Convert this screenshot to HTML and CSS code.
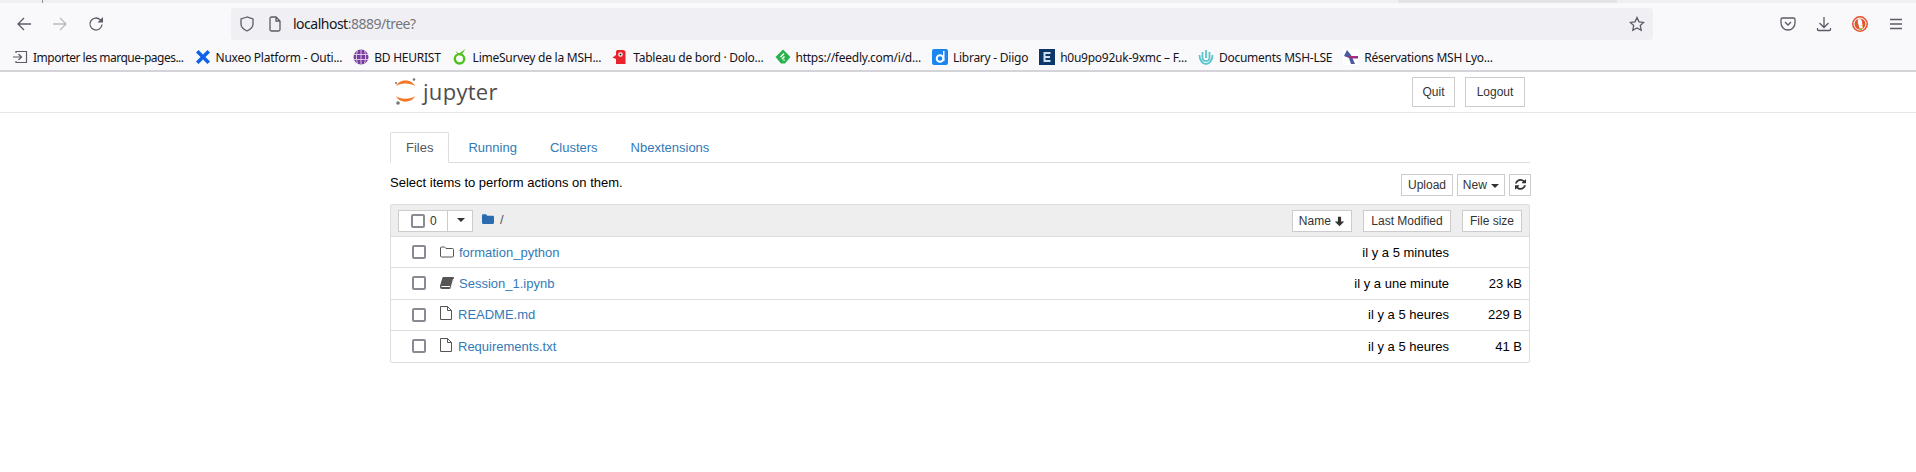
FILE: index.html
```html
<!DOCTYPE html>
<html lang="fr">
<head>
    <meta charset="UTF-8">
    <title>Home Page - Select or create a notebook</title>
    <link rel="stylesheet" href="styles.css">
</head>
<body>
    <!-- Browser toolbar -->
    <div class="tab-strip">
        <span class="tab-divider"></span>
        <span class="tab-shadow"></span>
    </div>
    <div class="nav-bar">
        <svg class="nav-icon back" viewBox="0 0 16 16"><path d="M15 8H2M8 2L2 8l6 6"/></svg>
        <svg class="nav-icon forward" viewBox="0 0 16 16"><path d="M1 8h13M8 2l6 6-6 6"/></svg>
        <svg class="nav-icon reload" viewBox="0 0 16 16"><path d="M14 8.500A6 6 0 1 1 12.200 3.700L14 5.200"/><path class="solid" d="M15 1v5.500h-5.500z"/></svg>
        <div class="url-bar">
            <svg class="url-icon" viewBox="0 0 16 16"><path d="M8 1L2 3v5c0 3.500 2.500 5.500 6 7 3.500-1.500 6-3.500 6-7V3z"/></svg>
            <svg class="url-icon page" viewBox="0 0 16 16"><path d="M3 2.500A1.500 1.500 0 0 1 4.500 1H9l4 4v8.500a1.500 1.500 0 0 1-1.500 1.500h-7A1.500 1.500 0 0 1 3 13.500zM9 1v4h4"/></svg>
            <span class="url-text">localhost<span class="url-rest">:8889/tree?</span></span>
            <svg class="url-icon star" viewBox="0 0 16 16"><path d="M8 1.500l2 4.300 4.700.6-3.400 3.200.9 4.700L8 12l-4.200 2.300.9-4.700L1.300 6.400 6 5.800z"/></svg>
        </div>
        <svg class="nav-icon pocket" viewBox="0 0 16 16"><path d="M2.500 2h11A1.500 1.500 0 0 1 15 3.500V7a7 7 0 0 1-14 0V3.500A1.500 1.500 0 0 1 2.500 2zM5 6l3 3 3-3"/></svg>
        <svg class="nav-icon download" viewBox="0 0 16 16"><path d="M8 1v10M3.500 7L8 11.500 12.500 7M1.500 12v1.500a1 1 0 0 0 1 1h11a1 1 0 0 0 1-1V12"/></svg>
        <svg class="nav-icon duck" viewBox="0 0 16 16">
            <circle class="duck-ring" cx="8" cy="8" r="7.200"/>
            <circle class="duck-fill" cx="8" cy="8" r="5.500"/>
            <path class="duck-body" d="M6 3.500c2-1 4 0 4 2.500 0 1.500 1 3 .5 6.500H7.500C7.500 10 5 7 6 3.500z"/>
            <path class="duck-beak" d="M8 9.500l3-.5v1.500z"/>
            <path class="duck-tie" d="M7.500 12.500h3l-1 1.500h-1.500z"/>
        </svg>
        <svg class="nav-icon menu" viewBox="0 0 16 16"><path d="M2 3.500h12M2 8h12M2 12.500h12"/></svg>
    </div>

    <!-- Bookmarks -->
    <div class="bookmarks">
        <a class="bm bm-import">
            <svg class="bm-icon" viewBox="0 0 16 16"><path class="line" d="M1 8h8M6.500 5L9.500 8l-3 3M4 4V2.500h10.500v11H4V12"/></svg>
            Importer les marque-pages...
        </a>
        <a class="bm">
            <svg class="bm-icon" viewBox="0 0 16 16"><path d="M1 3.500L3.500 1 8 5.500 12.500 1 15 3.500 10.500 8l4.500 4.500-2.500 2.500L8 10.500 3.500 15 1 12.500 5.500 8z" fill="#0f62e6"/></svg>
            Nuxeo Platform - Outi...
        </a>
        <a class="bm">
            <svg class="bm-icon" viewBox="0 0 16 16"><circle cx="8" cy="8" r="7.500" fill="#7a3d9e"/><path d="M.5 5.500h15M.5 10.500h15M8 .5v15M4.500 1.500c-1.500 4-1.500 9 0 13M11.500 1.500c1.500 4 1.500 9 0 13" stroke="#d9c6e6" fill="none"/></svg>
            BD HEURIST
        </a>
        <a class="bm">
            <svg class="bm-icon" viewBox="0 0 16 16"><circle cx="7.500" cy="9.800" r="4.700" fill="none" stroke="#4fc01e" stroke-width="2.400"/><path d="M3.500 2l3.500 2.500L13.500 0 9 6.500 6 5.500z" fill="#4fc01e"/></svg>
            LimeSurvey de la MSH...
        </a>
        <a class="bm">
            <svg class="bm-icon" viewBox="0 0 16 16"><path d="M4 3c0-1.500 1-2 2-2h5c1.500 0 2.500 1 2.500 2v12H4V10L.5 8.500 4 6z" fill="#e8242c"/><circle cx="8.500" cy="5.500" r="2.200" fill="#fff"/><circle cx="8.500" cy="5.500" r="1" fill="#222"/></svg>
            Tableau de bord · Dolo...
        </a>
        <a class="bm">
            <svg class="bm-icon" viewBox="0 0 16 16"><path d="M8 .5L15.500 8 10 14.500H6L.5 8z" fill="#2bb24c"/><path d="M8.500 4L5 7.500l1 1L9.500 5zM9 7L6.500 9.500l1 1L10 8zM9 10l-1 1 1 1 1-1z" fill="#fff"/></svg>
            https://feedly.com/i/d...
        </a>
        <a class="bm">
            <svg class="bm-icon" viewBox="0 0 16 16"><rect width="16" height="16" rx="2" fill="#1a86f0"/><circle cx="8" cy="9.500" r="3.300" fill="none" stroke="#fff" stroke-width="2"/><path d="M11 2h1.500v10H11z" fill="#fff"/></svg>
            Library - Diigo
        </a>
        <a class="bm">
            <svg class="bm-icon" viewBox="0 0 16 16"><rect width="16" height="16" fill="#0c3768"/><path d="M4.500 3h7v2h-5v2h4.500v2H6.500v2h5v2h-7z" fill="#cfe2f3"/></svg>
            h0u9po92uk-9xmc – F...
        </a>
        <a class="bm">
            <svg class="bm-icon" viewBox="0 0 16 16"><path d="M1.500 6c0 5 3 9 6.500 9s6.500-4 6.500-9M4.500 3v5.500c0 2 1.500 3.500 3.500 3.500s3.500-1.500 3.500-3.500V3M8 1v8" fill="none" stroke="#5cc4ce" stroke-width="1.800"/></svg>
            Documents MSH-LSE
        </a>
        <a class="bm">
            <svg class="bm-icon" viewBox="0 0 16 16"><rect width="16" height="16" fill="#fff"/><path d="M4 1l4 5 4 9H8L6 9 1 7z" fill="#4a5a9e"/><path d="M3 7h12v2.500H8z" fill="#a0307e"/></svg>
            Réservations MSH Lyo...
        </a>
    </div>

    <!-- Jupyter header -->
    <div class="header">
        <div class="container header-row">
            <a class="logo">
                <svg class="logo-mark" viewBox="0 0 22 28">
                    <path class="logo-arc" d="M1 8C4 .5 17 .5 20 8 16 4.500 5 4.500 1 8z"/>
                    <path class="logo-arc" d="M1 18c3 7.500 16 7.500 19 0-4 3.500-15 3.500-19 0z"/>
                    <circle class="logo-moon" cx="19" cy="1.500" r="1.300"/>
                    <circle class="logo-moon" cx="1" cy="5" r="1"/>
                    <circle class="logo-moon" cx="3" cy="25" r="1.800"/>
                </svg>
                <span class="logo-text">jupyter</span>
            </a>
            <div class="header-btns">
                <button class="btn btn-tall btn-quit">Quit</button>
                <button class="btn btn-tall btn-logout">Logout</button>
            </div>
        </div>
    </div>

    <div class="container main">
        <ul class="tabs">
            <li class="tab active">Files</li>
            <li class="tab">Running</li>
            <li class="tab">Clusters</li>
            <li class="tab">Nbextensions</li>
        </ul>

        <div class="toolbar">
            <span class="select-hint">Select items to perform actions on them.</span>
            <div class="toolbar-btns">
                <button class="btn btn-upload">Upload</button>
                <button class="btn btn-new">New <span class="caret"></span></button>
                <button class="btn btn-refresh">
                    <svg class="fa" viewBox="0 0 1536 1536"><path d="M1511 896q0 5-1 7-64 268-268 434.500T764 1504q-146 0-282.500-55T238 1292l-129 129q-19 19-45 19t-45-19-19-45V928q0-26 19-45t45-19h448q26 0 45 19t19 45-19 45l-137 137q71 66 161 102t187 36q134 0 250-65t186-179q11-17 53-117 8-23 30-23h192q13 0 22.500 9.500T1511 896zm25-800v448q0 26-19 45t-45 19h-448q-26 0-45-19t-19-45 19-45l138-138Q969 256 768 256q-134 0-250 65T332 500q-11 17-53 117-8 23-30 23H50q-13 0-22.500-9.500T18 608v-7q65-268 270-434.500T768 0q146 0 284 55.500T1297 212l130-129q19-19 45-19t45 19 19 45z"/></svg>
                </button>
            </div>
        </div>

        <div class="file-list">
            <div class="list-head">
                <div class="select-group">
                    <span class="select-count"><span class="checkbox"></span>0</span>
                    <span class="select-drop"><span class="caret"></span></span>
                </div>
                <svg class="crumb-icon" viewBox="0 0 16 13"><path d="M1.500 0h4l1.500 2h7.500A1.500 1.500 0 0 1 16 3.500v8a1.500 1.500 0 0 1-1.500 1.500h-13A1.500 1.500 0 0 1 0 11.500v-10A1.500 1.500 0 0 1 1.500 0z"/></svg>
                <span class="crumb">/</span>
                <div class="sort-btns">
                    <button class="btn sort-name">Name
                        <svg class="fa arrow" viewBox="0 0 14 14"><path d="M5 1h4v6h4l-6 6-6-6h4z"/></svg>
                    </button>
                    <button class="btn sort-date">Last Modified</button>
                    <button class="btn sort-size">File size</button>
                </div>
            </div>

            <div class="row">
                <span class="checkbox"></span>
                <svg class="row-icon" viewBox="0 0 14 12"><path d="M1.500 1h3l1.500 1.500h6.500a1 1 0 0 1 1 1v6.500a1 1 0 0 1-1 1h-11a1 1 0 0 1-1-1V2a1 1 0 0 1 1-1z"/></svg>
                <a class="name">formation_python</a>
                <span class="modified">il y a 5 minutes</span>
                <span class="size"></span>
            </div>
            <div class="row">
                <span class="checkbox"></span>
                <svg class="row-icon solid-icon" viewBox="0 0 14 12"><path d="M3 .5h10.500L11 10c-.3 1-.8 1.500-2 1.500H1.500C.5 11.500 0 10.800.3 9.500z"/><path class="book-line" d="M1.500 9.500h8.500M13.500 2L11 11"/></svg>
                <a class="name">Session_1.ipynb</a>
                <span class="modified">il y a une minute</span>
                <span class="size">23 kB</span>
            </div>
            <div class="row">
                <span class="checkbox"></span>
                <svg class="row-icon file-icon" viewBox="0 0 12 14"><path d="M.5.500h7l4 4v9H.5zM7.500.500v4h4"/></svg>
                <a class="name">README.md</a>
                <span class="modified">il y a 5 heures</span>
                <span class="size">229 B</span>
            </div>
            <div class="row">
                <span class="checkbox"></span>
                <svg class="row-icon file-icon" viewBox="0 0 12 14"><path d="M.5.500h7l4 4v9H.5zM7.500.500v4h4"/></svg>
                <a class="name">Requirements.txt</a>
                <span class="modified">il y a 5 heures</span>
                <span class="size">41 B</span>
            </div>
        </div>
    </div>
</body>
</html>
```

FILE: styles.css
```css
* {
    box-sizing: border-box;
}
body {
    margin: 0;
    background: #fff;
    font-family: "Liberation Sans", Arial, sans-serif;
    font-size: 13px;
    color: #000;
}

/* Browser toolbar */
.tab-strip {
    display: flex;
    height: 3px;
    background: #f0f0f4;
}
.tab-divider {
    width: 1px;
    margin-left: 42px;
    background: #8f8f96;
}
.tab-shadow {
    width: 219px;
    margin-left: 1355px;
    background: #e4e4e8;
}
.nav-bar {
    display: flex;
    align-items: center;
    height: 41px;
    padding: 4px 0 4px 16px;
    background: #f9f9fb;
}
.nav-icon {
    width: 16px;
    height: 16px;
    margin-right: 20px;
    fill: none;
    stroke: #5b5b66;
    stroke-width: 1.300;
    flex: none;
}
.nav-icon.forward {
    stroke: #b9b9bf;
}
.nav-icon .solid {
    fill: #5b5b66;
    stroke: none;
}
.url-bar {
    display: flex;
    align-items: center;
    width: 1422px;
    height: 32px;
    margin: 0 127px 0 107px;
    padding: 0 8px;
    background: #f0f0f4;
    border-radius: 4px;
    flex: none;
}
.url-icon {
    width: 16px;
    height: 16px;
    margin-right: 12px;
    fill: none;
    stroke: #5b5b66;
    stroke-width: 1.300;
    flex: none;
}
.url-icon.page {
    margin-right: 10px;
}
.url-text {
    font-family: "Noto Sans", sans-serif;
    font-size: 14px;
    letter-spacing: -0.5px;
    color: #15141a;
}
.url-rest {
    color: #77767c;
}
.url-icon.star {
    margin: 0 0 0 auto;
}
.duck-ring {
    fill: #fff;
    stroke: #e5502a;
    stroke-width: 1.500;
}
.duck-fill {
    fill: #de5833;
    stroke: none;
}
.duck-body {
    fill: #fff;
    stroke: none;
}
.duck-beak {
    fill: #f2b632;
    stroke: none;
}
.duck-tie {
    fill: #67bd45;
    stroke: none;
}

/* Bookmarks */
.bookmarks {
    display: flex;
    align-items: center;
    height: 28px;
    padding-left: 12px;
    background: #f9f9fb;
    border-bottom: 2px solid #d4d4d8;
    font-family: "Noto Sans", sans-serif;
    font-size: 12px;
    letter-spacing: -0.25px;
    color: #15141a;
    white-space: nowrap;
}
.bm {
    display: flex;
    align-items: center;
    gap: 5px;
    margin-right: 11px;
}
.bm-import {
    letter-spacing: -0.5px;
}
.bm-icon {
    width: 16px;
    height: 16px;
    flex: none;
}
.bm-icon .line {
    fill: none;
    stroke: #5b5b66;
    stroke-width: 1.200;
}

/* Jupyter page */
.container {
    width: 1140px;
    margin-left: 390px;
}
.header {
    height: 41px;
    border-bottom: 1px solid #e7e7e7;
}
.header-row {
    display: flex;
    align-items: center;
    justify-content: space-between;
    height: 40px;
}
.logo {
    display: flex;
    align-items: center;
    margin-left: 5px;
}
.logo-mark {
    width: 22px;
    height: 28px;
}
.logo-arc {
    fill: #f37726;
}
.logo-moon {
    fill: #767677;
}
.logo-text {
    margin: -3px 0 0 6px;
    font-family: "Open Sans", sans-serif;
    font-size: 22px;
    letter-spacing: 0.3px;
    color: #4e4e4e;
}
.header-btns {
    display: flex;
    gap: 10px;
    margin-right: 5px;
}
.btn {
    height: 22px;
    padding: 0 7px;
    background: #fff;
    border: 1px solid #ccc;
    font-family: "Liberation Sans", Arial, sans-serif;
    font-size: 12px;
    color: #333;
}
.btn-tall {
    height: 30px;
    padding: 0 12px;
}
.btn-quit {
    width: 43px;
    padding: 0;
}
.btn-logout {
    width: 60px;
    padding: 0;
}
.main {
    padding-top: 19px;
}
.tabs {
    display: flex;
    height: 31px;
    margin: 0;
    padding: 0;
    list-style: none;
    border-bottom: 1px solid #ddd;
}
.tab {
    height: 31px;
    padding: 7px 15px 0;
    margin-right: 3px;
    color: #337ab7;
    line-height: 18px;
}
.tab.active {
    background: #fff;
    color: #555;
    border: 1px solid #ddd;
    border-bottom-color: #fff;
    border-radius: 2px 2px 0 0;
    margin-right: 4px;
    padding: 6px 15px 0;
}
.toolbar {
    display: flex;
    justify-content: space-between;
    align-items: flex-start;
    height: 41px;
    padding-top: 11px;
}
.select-hint {
    margin-top: 1px;
    line-height: 16px;
}
.toolbar-btns {
    display: flex;
    gap: 4px;
    margin-right: -1px;
}
.btn-upload {
    width: 52px;
    padding: 0;
}
.btn-new {
    width: 48px;
    padding: 0;
}
.caret {
    display: inline-block;
    width: 0;
    height: 0;
    margin-left: 1px;
    vertical-align: middle;
    border-top: 4px solid #333;
    border-left: 4px solid transparent;
    border-right: 4px solid transparent;
}
.btn-refresh {
    width: 22px;
    padding: 0;
}
.fa {
    width: 11px;
    height: 11px;
    fill: #333;
    vertical-align: -1px;
}
.file-list {
    width: 1140px;
    border: 1px solid #ddd;
    border-radius: 2px;
}
.list-head {
    display: flex;
    align-items: center;
    height: 32px;
    padding: 0 7px;
    background: #eee;
    border-bottom: 1px solid #ddd;
}
.select-group {
    display: flex;
    width: 75px;
    height: 22px;
    background: #fff;
    border: 1px solid #ccc;
    color: #333;
}
.select-count {
    display: flex;
    align-items: center;
    gap: 5px;
    width: 49px;
    padding-left: 12px;
    border-right: 1px solid #ccc;
    font-size: 12px;
}
.select-drop {
    flex: 1;
    text-align: center;
    line-height: 18px;
}
.checkbox {
    flex: none;
    width: 14px;
    height: 14px;
    background: #fff;
    border: 2px solid #8a8a94;
    border-radius: 2px;
}
.crumb-icon {
    width: 12px;
    height: 10px;
    margin: -3px 0 0 9px;
    fill: #2a6cae;
}
.crumb {
    margin: -3px 0 0 6px;
    color: #555;
}
.sort-btns {
    display: flex;
    margin-left: auto;
}
.sort-name {
    width: 60px;
    padding: 0 5px;
}
.sort-date {
    width: 88px;
    margin-left: 11px;
    padding: 0 5px;
}
.sort-size {
    width: 60px;
    margin-left: 11px;
    padding: 0 5px;
}
.arrow {
    vertical-align: -2px;
}
.row {
    display: flex;
    align-items: center;
    height: 31.330px;
    padding: 0 7px 0 21px;
    border-bottom: 1px solid #ddd;
}
.row:last-child {
    height: 31px;
    border-bottom: none;
}
.row-icon {
    width: 14px;
    height: 12px;
    margin: -1px 5px 0 14px;
    fill: none;
    stroke: #555;
    stroke-width: 1;
    flex: none;
}
.solid-icon {
    fill: #555;
}
.book-line {
    stroke: #fff;
}
.file-icon {
    width: 12px;
    height: 14px;
    margin: -3px 6px 0 14px;
}
.name {
    color: #337ab7;
}
.modified {
    margin-left: auto;
    text-align: right;
}
.size {
    width: 73px;
    text-align: right;
}
```
